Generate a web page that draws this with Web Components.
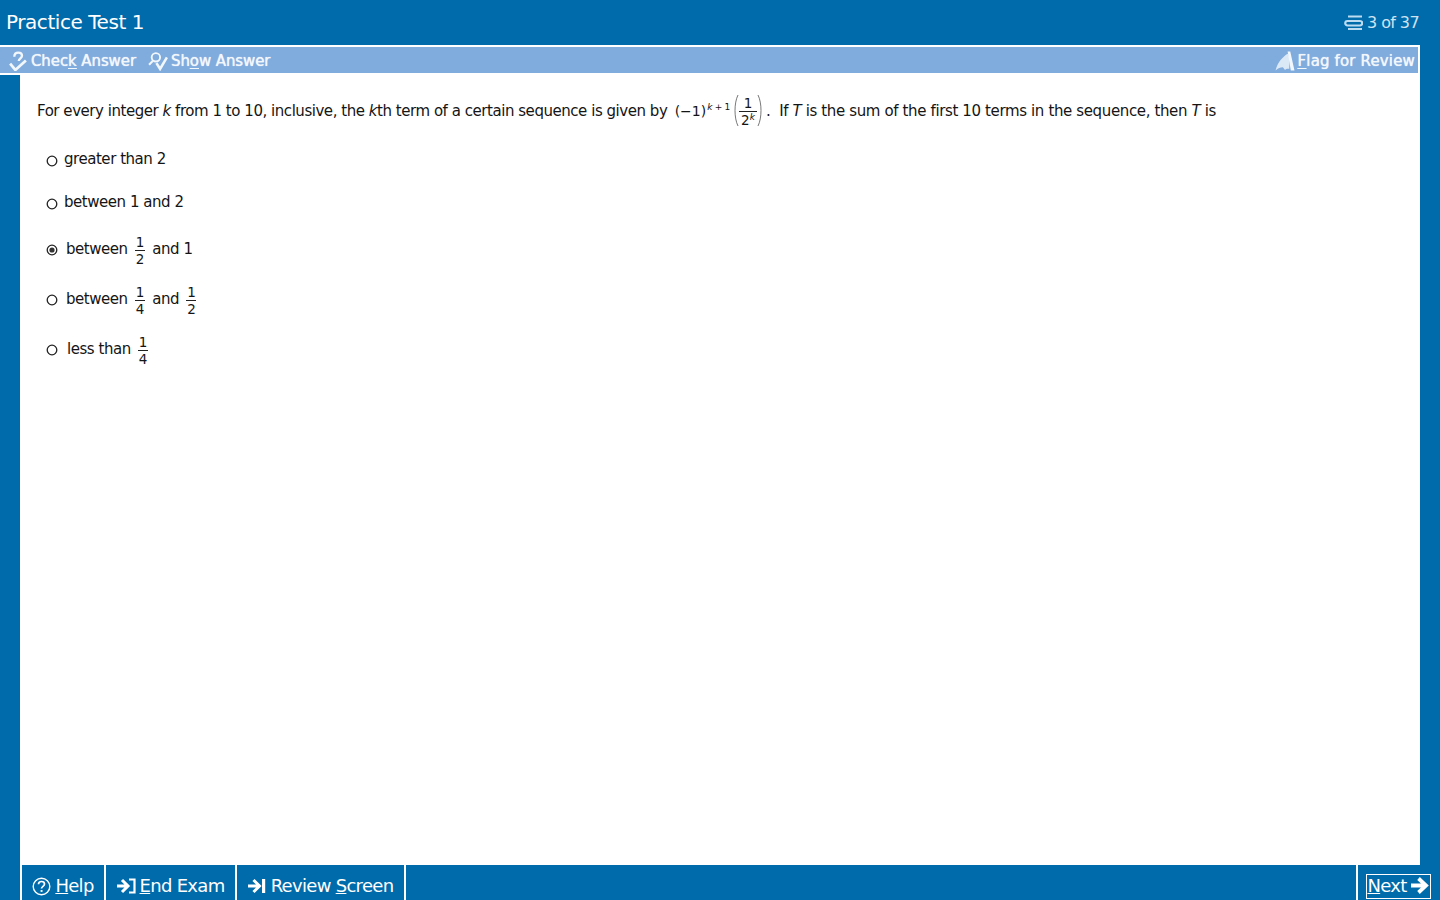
<!DOCTYPE html>
<html lang="en">
<head>
<meta charset="utf-8">
<title>Practice Test 1</title>
<style>
    html, body { margin: 0; height: 100%; overflow: hidden; background: #fff; }
    body { font-family: "DejaVu Sans", Verdana, sans-serif; color: #111; }
</style>
</head>
<body>
<exam-app>
    <exam-header slot="header" title="Practice Test 1" progress="3 of 37"></exam-header>
    <exam-toolbar slot="toolbar"></exam-toolbar>
    <question-panel>
        <question-stem></question-stem>
        <answer-choice space="17" gap="6" drop="4">greater than 2</answer-choice>
        <answer-choice space="17" gap="6" drop="4">between 1 and 2</answer-choice>
        <answer-choice space="18" gap="8" drop="2" selected>between <math-frac top="1" bottom="2"></math-frac> and 1</answer-choice>
        <answer-choice space="19" gap="8" drop="2">between <math-frac top="1" bottom="4"></math-frac> and <math-frac top="1" bottom="2"></math-frac></answer-choice>
        <answer-choice space="19" gap="9" drop="2">less than <math-frac top="1" bottom="4"></math-frac></answer-choice>
    </question-panel>
    <exam-footer slot="footer"></exam-footer>
</exam-app>

<script>
    /**
     * Icon paths shared by the toolbar and footer buttons.
     */
    const ICONS = {
        check: '<path d="M6 5.500c0-2.500 1.600-4 3.800-4 2.100 0 3.500 1.300 3.500 3 0 2.200-3 2.700-3.100 5" fill="none" stroke="currentColor" stroke-width="2.200"/><path d="M2 12l5 6 10-9" fill="none" stroke="currentColor" stroke-width="2.600"/>',
        show: '<circle cx="7.500" cy="6" r="4" fill="none" stroke="currentColor" stroke-width="1.800"/><path d="M4.500 9.500L1 13" stroke="currentColor" stroke-width="2"/><path d="M8 11.500l3.500 5.500L18 6" fill="none" stroke="currentColor" stroke-width="2.500"/>',
        flag: '<path d="M12 2.500C8 5 2.500 10 .5 18.500 3 16.500 5 15.500 7.500 15.500l2 2.500c1-1 2.500-1.500 4-1l.5-11z" fill="currentColor" opacity=".8"/><path d="M12 .5h2.500l4 18h-3.500z" fill="currentColor"/>',
        clip: '<path d="M4 3.500h14M3.500 8h12.500a2.200 2.200 0 0 1 0 4.500H3.500a2.200 2.200 0 0 1 0-4.500zM4 16h14" fill="none" stroke="currentColor" stroke-width="2.200"/>',
        help: '<circle cx="9.500" cy="9.500" r="8.300" fill="none" stroke="currentColor" stroke-width="1.400"/><path d="M6.500 7.300c0-1.800 1.300-2.800 3-2.800s3 1 3 2.500c0 2.300-3 2.300-3 4.500" fill="none" stroke="currentColor" stroke-width="1.700"/><rect x="8.600" y="13" width="1.900" height="1.900" fill="currentColor"/>',
        end: '<path d="M0 9h10.500M5 3L11 9l-6 6" fill="none" stroke="currentColor" stroke-width="3"/><path d="M12 2.500h5.500v13H12" fill="none" stroke="currentColor" stroke-width="2.200"/>',
        review: '<path d="M0 9h10.500M5.500 3L11.500 9l-6 6" fill="none" stroke="currentColor" stroke-width="3"/><rect x="14" y="2" width="3.200" height="14" fill="currentColor"/>',
        next: '<path d="M0 9.500h14M7.500 2.500l7.500 7-7.500 7" fill="none" stroke="currentColor" stroke-width="3.800"/>'
    };

    /**
     * Small inline icon looked up by name.
     */
    class ExamIcon extends HTMLElement {
        connectedCallback() {
            const size = this.getAttribute('size') || 19;
            this.attachShadow({ mode: 'open' }).innerHTML = `
                <style>
                    :host { display: inline-flex; flex: none; }
                    svg { display: block; }
                </style>
                <svg width="${size}" height="${size}" viewBox="0 0 19 19">${ICONS[this.getAttribute('name')]}</svg>
            `;
        }
    }

    /**
     * Page frame: header, toolbar, blue rails and footer.
     */
    class ExamApp extends HTMLElement {
        constructor() {
            super();
            this.attachShadow({ mode: 'open' }).innerHTML = `
                <style>
                    :host { display: flex; flex-direction: column; height: 100vh; background: #006bab; }
                    main { flex: 1; min-height: 0; display: flex; padding: 0 20px; }
                    .body { flex: 1; background: #fff; }
                </style>
                <slot name="header"></slot>
                <slot name="toolbar"></slot>
                <main><div class="body"><slot></slot></div></main>
                <slot name="footer"></slot>
            `;
        }
    }

    /**
     * Blue title row with the question counter.
     */
    class ExamHeader extends HTMLElement {
        connectedCallback() {
            this.attachShadow({ mode: 'open' }).innerHTML = `
                <style>
                    :host { display: flex; align-items: center; justify-content: space-between; height: 45px; padding: 0 21px 1px 6px; box-sizing: border-box; color: #fff; }
                    h1 { margin: 0; font: 400 20px "DejaVu Sans", sans-serif; letter-spacing: -0.45px; }
                    .progress { display: flex; align-items: center; gap: 4px; font-size: 16px; letter-spacing: -0.6px; color: #cfe3f2; }
                    exam-icon { color: #bcdcf2; }
                </style>
                <h1>${this.getAttribute('title')}</h1>
                <div class="progress"><exam-icon name="clip"></exam-icon><span>${this.getAttribute('progress')}</span></div>
            `;
        }
    }

    /**
     * Light blue action bar under the header.
     */
    class ExamToolbar extends HTMLElement {
        constructor() {
            super();
            this.attachShadow({ mode: 'open' }).innerHTML = `
                <style>
                    :host { display: block; width: 1418px; border: solid #fff; border-width: 2px 2px 2px 0; background: #7fabdd; }
                    .bar { display: flex; align-items: center; box-sizing: border-box; height: 26px; padding: 1px 3px 0 8px; color: #f2f7fc; font-size: 15px; letter-spacing: -0.1px; text-shadow: 0 0 1px #fff; }
                    .action { display: flex; align-items: center; gap: 3px; margin-right: 12px; }
                    .flag { margin: 0 0 0 auto; gap: 3px; letter-spacing: 0.15px; }
                    u { text-underline-offset: 2px; }
                </style>
                <div class="bar">
                    <span class="action"><exam-icon name="check" size="20"></exam-icon><span>Chec<u>k</u> Answer</span></span>
                    <span class="action"><exam-icon name="show" size="20"></exam-icon><span>Sh<u>o</u>w Answer</span></span>
                    <span class="action flag"><exam-icon name="flag" size="20"></exam-icon><span><u>F</u>lag for Review</span></span>
                </div>
            `;
        }
    }

    class QuestionPanel extends HTMLElement {
        constructor() {
            super();
            this.attachShadow({ mode: 'open' }).innerHTML = `
                <style>
                    :host { display: block; padding: 17px 0 0 17px; font-size: 15px; letter-spacing: -0.46px; color: #151515; }
                </style>
                <slot></slot>
            `;
        }
    }

    /**
     * Question text with its inline formula.
     */
    class QuestionStem extends HTMLElement {
        constructor() {
            super();
            this.attachShadow({ mode: 'open' }).innerHTML = `
                <style>
                    :host { display: flex; align-items: center; height: 37px; white-space: pre; }
                    .formula { display: inline-flex; align-items: center; margin: 0 3px 0 3px; letter-spacing: 0; font-size: 14px; }
                    sup { font-size: 9px; letter-spacing: -0.3px; line-height: 0; position: relative; top: -4px; vertical-align: baseline; margin-left: 1px; }
                    svg { display: block; flex: none; }
                    math-frac { margin: 0; --bar: 18px; }
                    .rest { letter-spacing: -0.37px; }
                </style>
                <span>For every integer <i>k</i> from 1 to 10, inclusive, the <i>k</i>th term of a certain sequence is given by </span>
                <span class="formula">(−1)<sup><i>k</i> + 1</sup>
                    <svg width="6" height="33" viewBox="0 0 6 33" style="margin-left:3px"><path d="M5 1C1 9 1 24 5 32" fill="none" stroke="#555" stroke-width=".8"/></svg>
                    <math-frac top="1" bottom="2"><i slot="exp">k</i></math-frac>
                    <svg width="6" height="33" viewBox="0 0 6 33"><path d="M1 1C5 9 5 24 1 32" fill="none" stroke="#555" stroke-width=".8"/></svg>
                </span>
                <span class="rest">.  If <i>T</i> is the sum of the first 10 terms in the sequence, then <i>T</i> is</span>
            `;
        }
    }

    /**
     * Stacked fraction, with an optional exponent slot on the denominator.
     */
    class MathFrac extends HTMLElement {
        connectedCallback() {
            this.attachShadow({ mode: 'open' }).innerHTML = `
                <style>
                    :host { display: inline-flex; flex-direction: column; align-items: center; vertical-align: middle; font-size: 13.500px; line-height: 14px; letter-spacing: 0; min-width: 10px; width: var(--bar, auto); position: relative; top: 2px; }
                    .top { border-bottom: 1px solid #222; align-self: stretch; text-align: center; padding-bottom: 1px; }
                    .bottom { padding-top: 1px; }
                    ::slotted(i) { font-size: 9px; position: relative; top: -5px; }
                </style>
                <span class="top">${this.getAttribute('top')}</span>
                <span class="bottom">${this.getAttribute('bottom')}<slot name="exp"></slot></span>
            `;
        }
    }

    /**
     * One radio option. The space, gap and drop attributes set its spacing.
     */
    class AnswerChoice extends HTMLElement {
        connectedCallback() {
            const space = this.getAttribute('space') || 0;
            const gap = this.getAttribute('gap') || 8;
            const drop = this.getAttribute('drop') || 2;
            const dot = this.hasAttribute('selected') ? '<circle cx="6" cy="6" r="2.600" fill="#333"/>' : '';
            this.attachShadow({ mode: 'open' }).innerHTML = `
                <style>
                    :host { display: flex; align-items: center; gap: ${gap}px; margin: ${space}px 0 0 9px; min-height: 26px; white-space: pre; }
                    svg { flex: none; margin-top: ${drop}px; }
                    .label { display: inline-flex; align-items: center; gap: 3px; }
                </style>
                <svg width="12" height="12" viewBox="0 0 12 12"><circle cx="6" cy="6" r="4.800" fill="#fff" stroke="#222" stroke-width="1.300"/>${dot}</svg>
                <span class="label"><slot></slot></span>
            `;
        }
    }

    /**
     * Bottom bar of navigation buttons.
     */
    class ExamFooter extends HTMLElement {
        constructor() {
            super();
            this.attachShadow({ mode: 'open' }).innerHTML = `
                <style>
                    :host { display: flex; height: 35px; margin-left: 20px; color: #fff; }
                    .bar { flex: 1; display: flex; border-left: 2px solid #fff; font-size: 18px; letter-spacing: -0.7px; }
                    .edge { flex: 1; }
                </style>
                <div class="bar">
                    <foot-button icon="help" width="84"><u>H</u>elp</foot-button>
                    <foot-button icon="end" width="131"><u>E</u>nd Exam</foot-button>
                    <foot-button icon="review" width="169">Review <u>S</u>creen</foot-button>
                    <div class="edge"></div>
                    <foot-button class="next" icon="next" width="84" after focused><u>N</u>ext</foot-button>
                </div>
            `;
        }
    }

    /**
     * Footer button with an icon before or after its label.
     */
    class FootButton extends HTMLElement {
        connectedCallback() {
            const icon = `<exam-icon name="${this.getAttribute('icon')}"></exam-icon>`;
            const after = this.hasAttribute('after');
            this.attachShadow({ mode: 'open' }).innerHTML = `
                <style>
                    :host { display: flex; align-items: center; justify-content: center; box-sizing: border-box; width: ${this.getAttribute('width')}px; border-right: 2px solid #fff; padding-top: 7px; }
                    :host([after]) { border-right: 0; border-left: 2px solid #fff; justify-content: flex-start; padding: 7px 0 0 9px; }
                    .inner { display: flex; align-items: center; gap: 4px; line-height: 22px; }
                    :host([focused]) .inner { outline: 1px solid #fff; padding: 0 0 1px 0; width: 63px; justify-content: center; box-sizing: border-box; }
                    u { text-underline-offset: 2px; }
                </style>
                <span class="inner">${after ? '' : icon}<span><slot></slot></span>${after ? icon : ''}</span>
            `;
        }
    }

    customElements.define('exam-icon', ExamIcon);
    customElements.define('exam-app', ExamApp);
    customElements.define('exam-header', ExamHeader);
    customElements.define('exam-toolbar', ExamToolbar);
    customElements.define('question-panel', QuestionPanel);
    customElements.define('question-stem', QuestionStem);
    customElements.define('math-frac', MathFrac);
    customElements.define('answer-choice', AnswerChoice);
    customElements.define('exam-footer', ExamFooter);
    customElements.define('foot-button', FootButton);
</script>
</body>
</html>
